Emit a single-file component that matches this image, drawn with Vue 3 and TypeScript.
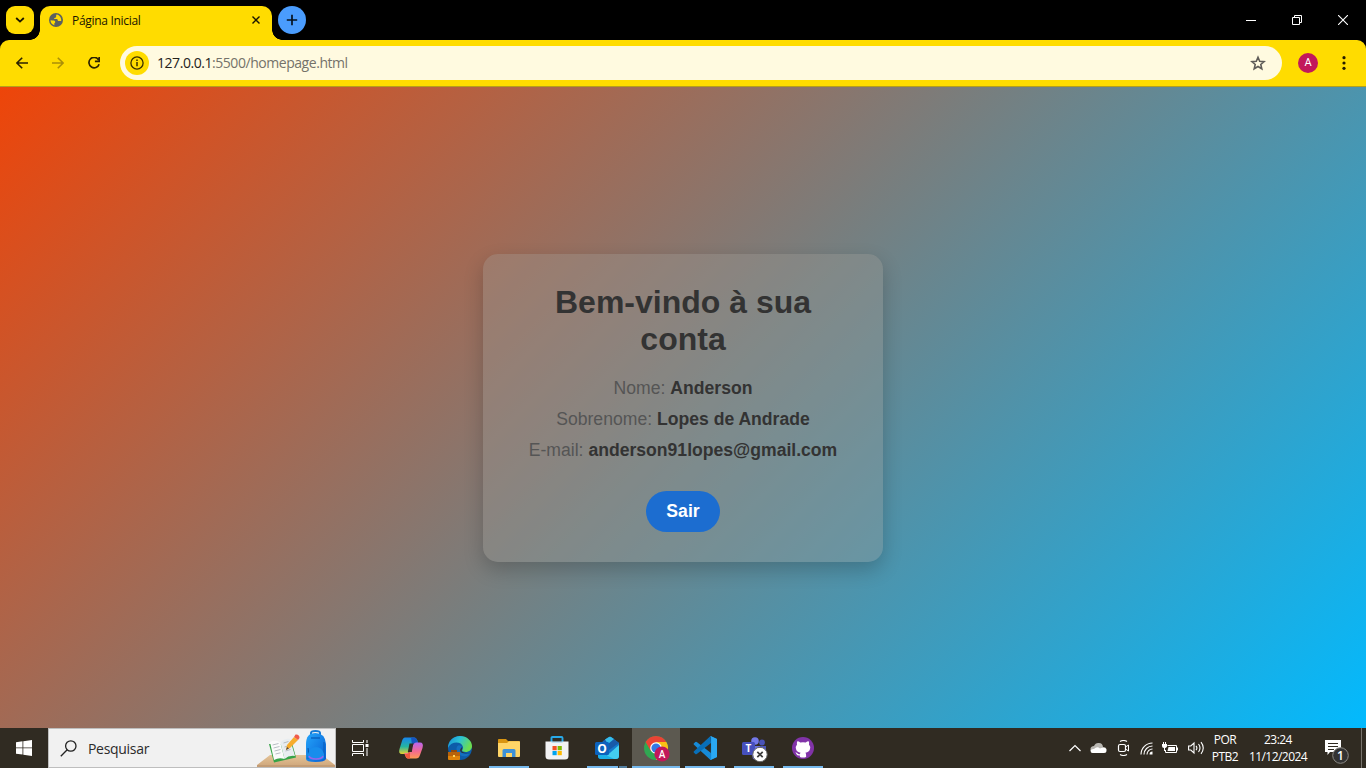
<script setup lang="ts">
interface Field {
  label: string
  value: string
}

const fields: Field[] = [
  { label: 'Nome:', value: 'Anderson' },
  { label: 'Sobrenome:', value: 'Lopes de Andrade' },
  { label: 'E-mail:', value: 'anderson91lopes@gmail.com' },
]
</script>

<template>
  <div class="screen">
    <header class="tabstrip">
      <button class="tab-search" aria-label="tabs">
        <svg width="10" height="6" viewBox="0 0 10 6"><path d="M1.2 1l3.8 3.6L8.800 1" fill="none" stroke="#1a1500" stroke-width="1.8" /></svg>
      </button>
      <div class="tab">
        <svg class="globe" width="14" height="14" viewBox="0 0 14 14">
          <circle cx="7" cy="7" r="7" fill="#5b6060" />
          <path d="M7.600 1.600C6.400 3 7.800 3.400 6.800 4.600 5.900 5.300 5.200 4.900 5.100 6.100H7.900C8.900 6.300 8.500 7.600 9.200 8H12.200C12.600 5 10.600 2 7.600 1.600Z" fill="#ffdc00" />
          <path d="M1.500 7.200C3.400 7.600 5.800 6.900 6.200 8.700 6.500 9.800 5 9.900 5.200 11L5.500 12.300C3.100 11.600 1.500 9.600 1.500 7.200Z" fill="#ffdc00" />
        </svg>
        <span class="tab-title">Página Inicial</span>
        <svg class="tab-close" width="8" height="8" viewBox="0 0 8 8"><path d="M.5.5l7 7M7.500.5l-7 7" stroke="#1a1500" stroke-width="1.400" /></svg>
      </div>
      <button class="new-tab" aria-label="new">
        <svg width="12" height="12" viewBox="0 0 12 12"><path d="M6 .8v10.400M.8 6h10.400" stroke="#06121f" stroke-width="1.700" /></svg>
      </button>
      <div class="window-controls">
        <svg width="10" height="10" viewBox="0 0 10 10"><path d="M0 5.500h10" stroke="#fff" /></svg>
        <svg width="10" height="10" viewBox="0 0 10 10"><path d="M.5 2.500h7v7h-7zM2.500 2.500v-2h7v7h-2" fill="none" stroke="#fff" /></svg>
        <svg width="10" height="10" viewBox="0 0 10 10"><path d="M0 0l10 10M10 0L0 10" stroke="#fff" stroke-width="1.100" /></svg>
      </div>
    </header>

    <div class="toolbar-back">
      <nav class="toolbar">
        <svg class="nav" width="12" height="12" viewBox="0 0 12 12"><path d="M12 6H1M6.200.7L.9 6l5.300 5.300" fill="none" stroke="#2b2100" stroke-width="1.600" /></svg>
        <svg class="nav" width="12" height="12" viewBox="0 0 12 12"><path d="M0 6h11M5.800.7L11.100 6l-5.300 5.300" fill="none" stroke="#ab8f08" stroke-width="1.600" /></svg>
        <svg class="nav" width="12" height="12" viewBox="0 0 12 12"><path d="M10.500 2.700A5.200 5.200 0 1 0 11.100 7.200M11.200 0v4.300H6.900" fill="none" stroke="#2b2100" stroke-width="1.700" /></svg>
        <div class="omnibox">
          <span class="info">
            <svg width="14" height="14" viewBox="0 0 14 14"><circle cx="7" cy="7" r="6.100" fill="none" stroke="#3a3000" stroke-width="1.300" /><path d="M7 6v4.300M7 3.600v1.500" stroke="#3a3000" stroke-width="1.500" /></svg>
          </span>
          <span class="url"><b>127.0.0.1</b>:5500/homepage.html</span>
          <svg class="star" width="16" height="16" viewBox="0 0 16 16"><path d="M8 2.200l1.700 4 4.400.4-3.300 2.900 1 4.300L8 11.500l-3.800 2.300 1-4.300L1.900 6.600l4.400-.4z" fill="none" stroke="#5f5c58" stroke-width="1.600" /></svg>
        </div>
        <span class="avatar">A</span>
        <svg class="kebab" width="4" height="14" viewBox="0 0 4 14"><g fill="#241c00"><circle cx="2" cy="1.700" r="1.600" /><circle cx="2" cy="7" r="1.600" /><circle cx="2" cy="12.300" r="1.600" /></g></svg>
      </nav>
    </div>

    <main class="page">
      <section class="card">
        <h1>Bem-vindo à sua<br />conta</h1>
        <p v-for="f in fields" :key="f.label">{{ f.label }} <strong>{{ f.value }}</strong></p>
        <button class="logout">Sair</button>
      </section>
    </main>

    <footer class="taskbar">
      <div class="start">
        <svg width="16" height="16" viewBox="0 0 16 16"><path d="M0 2.200L6.500 1.300V7.500H0zM7.300 1.200L16 0V7.500H7.300zM0 8.300H6.500V14.600L0 13.700zM7.300 8.300H16V16L7.300 14.700z" fill="#fff" /></svg>
      </div>
      <div class="search">
        <svg class="lens" width="17" height="17" viewBox="0 0 17 17"><circle cx="10.800" cy="6" r="5.200" fill="none" stroke="#222" stroke-width="1.300" /><path d="M7.200 9.800L.8 16.200" stroke="#222" stroke-width="1.300" /></svg>
        <span class="search-label">Pesquisar</span>
        <svg class="art" width="78" height="38" viewBox="0 0 78 38">
          <defs>
            <linearGradient id="bag" x1="0" y1="0" x2="1" y2="1"><stop stop-color="#25a5fa" /><stop offset="1" stop-color="#075fd4" /></linearGradient>
            <linearGradient id="desk" x1="0" y1="0" x2="0" y2="1"><stop stop-color="#e4c397" /><stop offset="1" stop-color="#cea57a" /></linearGradient>
          </defs>
          <path d="M13 26H65L78 36V38H0V36z" fill="url(#desk)" /><path d="M0 36H78V38H0z" fill="#c39c74" />
          <path d="M12 15L17 33.500L39 28.500L34.500 12L24 15z" fill="#35a447" />
          <path d="M13 13Q19 10 23.500 14L27.500 30Q22 28 17 31z" fill="#fafafa" /><path d="M23.500 14Q27 9 33 10L38 27Q32 26 27.500 30z" fill="#e8edf0" />
          <path d="M15.500 16l6-1.500M16.500 19l6-1.500M17.500 22l6-1.500M18.500 25l5-1.200M26.500 14l5-1.500M27.500 18l5-1.500M28.500 22l5-1.500" stroke="#a6adb5" stroke-width=".8" />
          <path d="M29 21L30 16L37 8L41 11L33 19z" fill="#f7ac2c" /><path d="M37 8L38.500 5.500Q42.500 5 42.500 9L41 11z" fill="#f05b49" /><path d="M29 21l1-3 2 1.600z" fill="#59483c" />
          <path d="M54 7V4Q54 2 58.500 2T63 4V7" fill="none" stroke="#1479d5" stroke-width="2" />
          <path d="M49 15Q49 4 58.500 4T69 15V30Q68 33 58.500 33T49 30z" fill="url(#bag)" />
          <path d="M51 19Q52 27 51 30M67 13V29" stroke="#075bb8" /><path d="M51 25Q53 18 59 18T67 25V29Q65 31 59 31T51 29z" fill="#188dec" /><path d="M52 27Q53 30 59 30T66 27" fill="none" stroke="#9864eb" stroke-width="1.500" />
          <path d="M54 9h9" stroke="#075bb8" stroke-width="1.300" />
        </svg>
      </div>
      <div class="cell taskview">
        <svg width="17" height="16" viewBox="0 0 17 16"><path d="M.5 0v2.500h11V0M.5 16v-2.500h11V16M.5 4.500h11v7H.5zM15 0v3M15 8v8" fill="none" stroke="#fff" /><path d="M13.500 4h3v3h-3z" fill="#fff" /></svg>
      </div>

      <div class="apps">
        <div class="cell">
          <svg width="26" height="24" viewBox="0 0 26 24">
            <defs>
              <linearGradient id="cpl" x1="0" y1="0" x2="0" y2="1"><stop stop-color="#1785ee" /><stop offset=".55" stop-color="#25b5a0" /><stop offset="1" stop-color="#e6d22f" /></linearGradient>
              <linearGradient id="cpr" x1="0" y1="0" x2="0" y2="1"><stop stop-color="#b765f0" /><stop offset=".55" stop-color="#f36a91" /><stop offset="1" stop-color="#ff9a52" /></linearGradient>
            </defs>
            <path d="M7 1.500H16Q18.500 1.500 19.500 5L20 7H17Q14 7 13 11L11 16Q10 18 7 18H4Q0 18 1.500 13L4 5Q5 1.500 7 1.500z" fill="url(#cpl)" />
            <path d="M13 1.500H16Q18.500 1.500 19.500 5L20 7H17Q15 7 14 9z" fill="#1655bf" />
            <path d="M18 22.500H10Q8 22.500 7 19L6 17H9Q12 17 13 13L15 9Q16 6.500 18 6.500H22Q26 6.500 24.500 12L22 19Q21 22.500 18 22.500z" fill="url(#cpr)" />
            <path d="M12 22.500H10Q8 22.500 7 18H9Q11 18 12 15z" fill="#f0583d" /><path d="M11.500 7.500h3.800l-1.500 8.500h-4z" fill="#302b22" />
          </svg>
        </div>
        <div class="cell">
          <svg width="24" height="24" viewBox="0 0 24 24">
            <defs><linearGradient id="edge" x1="0" y1="0" x2="1" y2=".4"><stop stop-color="#168bd8" /><stop offset=".5" stop-color="#2cc3d4" /><stop offset="1" stop-color="#6cdd50" /></linearGradient></defs>
            <circle cx="12" cy="12" r="12" fill="#0d5ca9" />
            <path d="M0 12C0 5 5 0 12 0s12 5 12 10c0 5-5 7-9 5.500-2-1 .5-2 0-4.500C13.500 5 3 5 0 12z" fill="url(#edge)" />
            <path d="M10 9.500C6 13 10 22 19 20L22 17.500C16 19 12 17 12.500 13.500L14 11Q12 8.500 10 9.500z" fill="#146fc0" />
            <path d="M12.500 13Q10.500 18.500 22.500 17Q17 18 13.500 15.500L14 11z" fill="#302b22" />
            <path d="M3 14h6v2H3z" fill="#934b0a" /><rect y="16" width="12" height="8" rx="1" fill="#df8309" /><path d="M0 17q0-1 1-1h10q1 0 1 1v3H0z" fill="#b7620b" /><path d="M5 19h2v2H5z" fill="#ffd35b" />
          </svg>
        </div>
        <div class="cell running">
          <svg width="22" height="20" viewBox="0 0 22 20"><path d="M0 1.500Q0 1 1 1H8L10 3H21V9H0z" fill="#d99511" /><path d="M0 5H9L11 3.300H22V18Q22 19 21 19H1Q0 19 0 18z" fill="#ffd567" /><path d="M4.500 19V12.500Q4.500 11 6 11H16Q17.500 11 17.500 12.500V19H14V15H8V19z" fill="#3d91d8" /></svg>
        </div>
        <div class="cell">
          <svg class="store" width="24" height="24" viewBox="0 0 24 24"><path d="M6.500 7V2Q6.500 1 7.500 1h9q1 0 1 1v5" fill="none" stroke="#28a9e8" stroke-width="1.900" /><path d="M.5 5.500h23v14.500q0 3.500-3.500 3.500H4Q.5 23.500.5 20z" fill="#f2f2f3" /><path d="M6.500 5.500h11v1.200h-11z" fill="#28a9e8" opacity=".35" /><path d="M7.500 10h4.200v4.200H7.500z" fill="#f25022" /><path d="M12.600 10h4.200v4.200h-4.200z" fill="#7fba00" /><path d="M7.500 15h4.200v4.200H7.500z" fill="#00a4ef" /><path d="M12.600 15h4.200v4.200h-4.200z" fill="#ffb900" /></svg>
        </div>
        <div class="cell running grouped">
          <svg width="24" height="24" viewBox="0 0 24 24"><path d="M3 9L14 1Q15 .5 16 1L24 7V20Q24 23 21 23H6Q3 23 3 20z" fill="#1479cc" /><path d="M8 5L14 1Q15 .5 16 1L24 7L14 14z" fill="#185aa9" /><path d="M10 3.500L14 1Q15 .5 16 1L19 3L13 8z" fill="#35bdeb" /><path d="M24 9V20Q24 23 21 23H8z" fill="#43cef0" /><path d="M3 15L19 23H6Q3 23 3 20z" fill="#1db0e8" /><rect y="6" width="14" height="13" rx="1.500" fill="#0c62bd" /><text x="7" y="16.500" text-anchor="middle" class="glyph outlook-o">O</text></svg>
        </div>
        <div class="cell running active">
          <svg class="chrome" width="28" height="28" viewBox="0 0 28 28">
            <circle cx="12" cy="14" r="12" fill="#30a752" /><path d="M1.600 8A12 12 0 0 1 22.400 8H12L6.800 17z" fill="#ea4335" /><path d="M12 8H22.400A12 12 0 0 1 12 26L17.200 17z" fill="#fbc116" /><circle cx="12" cy="14" r="5.800" fill="#fff" /><circle cx="12" cy="14" r="4.600" fill="#3478e5" />
            <circle cx="18" cy="20" r="7.600" fill="#c2185b" /><text x="18" y="23.700" text-anchor="middle" class="glyph badge-a">A</text>
          </svg>
        </div>
        <div class="cell running">
          <svg width="24" height="24" viewBox="0 0 24 24"><path d="M17.500 0L24 3V21L17.500 24L1 8.800Q0 8 1 7.200L2.300 6Q3 5.500 3.800 6L18 17V7z" fill="#178bd8" /><path d="M17.500 24L18 17V7L3.800 18Q3 18.500 2.300 18L1 16.800Q0 16 1 15.200L17.500 0L18 7z" fill="#086fb9" /><path d="M17.500 0L24 3V21L17.500 24L18.200 22V2z" fill="#2aa8f2" /></svg>
        </div>
        <div class="cell running">
          <svg class="teams" width="28" height="26" viewBox="0 0 28 26"><circle cx="21" cy="5.500" r="2.900" fill="#4953b7" /><path d="M17 9H25V14H17z" fill="#4b55b8" /><circle cx="14" cy="4" r="3.800" fill="#7379e9" /><path d="M9 9H19V19Q17 23 12 22z" fill="#6c73df" /><rect x="1" y="5" width="13" height="13" rx="1.500" fill="#4650bd" /><text x="7.500" y="15.300" text-anchor="middle" class="glyph teams-t">T</text><circle cx="19" cy="17.500" r="7.200" fill="#fff" stroke="#666" /><path d="M16.300 14.800l5.400 5.400M21.700 14.800l-5.400 5.400" stroke="#3d3d3d" stroke-width="1.700" /></svg>
        </div>
        <div class="cell running">
          <svg width="22" height="22" viewBox="0 0 22 22"><circle cx="11" cy="11" r="11" fill="#8133a8" /><path d="M5.200 4.400Q6.500 4.200 8.300 5.500Q11 4.900 13.700 5.500Q15.500 4.200 16.800 4.400Q17.400 6 17 7.400Q18.600 9.200 18 12Q17.300 15.200 13.400 15.700Q14.200 16.500 14.100 18V20Q11 21.200 7.900 20V18.400Q5.300 18.900 4.400 16.900Q4 16 3.200 15.500Q4.900 15.200 5.600 16.500Q6.500 17.700 8 17.100Q8.100 16.200 8.600 15.700Q4.700 15.200 4 12Q3.400 9.200 5 7.400Q4.600 6 5.200 4.400z" fill="#fff" /></svg>
        </div>
      </div>

      <div class="tray">
        <div class="status">
          <svg width="12" height="8" viewBox="0 0 12 8"><path d="M.5 7L6 1.500 11.500 7" fill="none" stroke="#fff" stroke-width="1.200" /></svg>
          <svg width="17" height="12" viewBox="0 0 17 12"><path d="M4 10Q0 10 .5 6.500Q1 4 4 4Q5.500.500 9 1Q12.500 1 13 5Q16.500 5 16.500 8L10 10z" fill="#b9b7b2" /><path d="M2.500 11Q.5 11 .5 8.500Q1 6.800 4 7Q7 4 10 6.500Q11 5.500 13.500 5.700Q16.500 6 16.500 8.500T14 11z" fill="#fff" /></svg>
          <svg width="13" height="16" viewBox="0 0 13 16"><path d="M3 1.500Q6.500-.5 10 1.500M3 14.500Q6.500 16.500 10 14.500" fill="none" stroke="#fff" stroke-width="1.100" /><rect x="1.500" y="4.500" width="7" height="7" rx="1.500" fill="none" stroke="#fff" stroke-width="1.200" /><path d="M8.500 7L11.500 5V11L8.500 9" fill="none" stroke="#fff" /></svg>
          <svg width="13" height="13" viewBox="0 0 13 13"><g fill="none" stroke="#fff" stroke-width="1.100"><path d="M1 12.500A11.500 11.500 0 0 1 12.500 1M4 12.500A8.500 8.500 0 0 1 12.500 4M7 12.500A5.500 5.500 0 0 1 12.500 7" /></g><path d="M9.500 12.500a3 3 0 0 1 3-3v3z" fill="#fff" /></svg>
          <svg width="16" height="12" viewBox="0 0 16 12"><path d="M5.500 3.500H14.500V10.500H3.500V8" fill="none" stroke="#fff" /><path d="M6.500 5H13V9H5.500z" fill="#fff" /><path d="M15 5.500h1v3h-1zM0 2h5v2.500Q4 6 3 6v3H2V6Q0 6 0 4z" fill="#fff" /><path d="M1.500 0v2M3.500 0v2" stroke="#fff" /></svg>
          <svg width="17" height="14" viewBox="0 0 17 14"><g fill="none" stroke="#fff" stroke-width="1.100"><path d="M.6 5h2.200L6 2v10L2.800 9H.6zM8 4.800Q9.800 7 8 9.200M10.500 3Q13.500 7 10.500 11M13 1.200Q17.500 7 13 12.800" /></g></svg>
        </div>
        <div class="lang"><span>POR</span><span>PTB2</span></div>
        <div class="clock"><span>23:24</span><span class="date">11/12/2024</span></div>
        <svg class="notice" width="26" height="26" viewBox="0 0 26 26"><path d="M1 1H17V13H6L3.500 16V13H1z" fill="#fff" /><path d="M4 4.500H14M4 7.500H14M4 10.500H10" stroke="#302b22" /><circle cx="16.500" cy="16.500" r="7.800" fill="#333" stroke="#8c8a85" /><text x="16.500" y="21" text-anchor="middle" class="glyph count">1</text></svg>
      </div>
    </footer>
  </div>
</template>

<style>
body { margin: 0; overflow: hidden; }
</style>

<style scoped>
.screen { width: 1366px; height: 768px; display: flex; flex-direction: column; font-family: "Open Sans", "Noto Sans", sans-serif; overflow: hidden; }
svg { display: block; flex: none; }
button { border: 0; padding: 0; }

.tabstrip { height: 40px; flex: none; background: #000; display: flex; box-sizing: border-box; padding: 6px 0 0 6px; }
.tab-search { width: 28px; height: 28px; border-radius: 9px; background: #ffdc00; display: grid; place-items: center; }
.tab { position: relative; width: 232px; height: 34px; margin-left: 6px; background: #ffdc00; border-radius: 10px 10px 0 0; display: flex; align-items: center; box-sizing: border-box; padding: 0 12px 6px 9px; }
.tab::before, .tab::after { content: ""; position: absolute; bottom: 0; width: 10px; height: 10px; }
.tab::before { left: -10px; background: radial-gradient(circle at 0 0, transparent 9.500px, #ffdc00 10px); }
.tab::after { right: -10px; background: radial-gradient(circle at 100% 0, transparent 9.500px, #ffdc00 10px); }
.tab-title { margin-left: 9px; font-size: 12px; letter-spacing: -0.3px; color: #1a1500; white-space: nowrap; line-height: 16px; padding-top: 2px; }
.tab-close { margin-left: auto; }
.new-tab { width: 28px; height: 28px; margin-left: 6px; border-radius: 50%; background: #4a9cfd; display: grid; place-items: center; }
.window-controls { margin-left: auto; display: flex; gap: 36px; padding: 9px 18px 0 0; }

.toolbar-back { background: #000; flex: none; }
.toolbar { height: 47px; box-sizing: border-box; background: #ffdc00; border-radius: 9px 9px 0 0; border-bottom: 1px solid #b5a01b; display: flex; align-items: center; padding: 0 20px 0 16px; }
.nav { margin-right: 24px; }
.omnibox { width: 1162px; height: 34px; flex: none; box-sizing: border-box; margin-left: -4px; border-radius: 17px; background: #fffae0; display: flex; align-items: center; padding: 0 16px 0 5px; }
.info { width: 24px; height: 24px; border-radius: 50%; background: #ffdc00; display: grid; place-items: center; }
.url { margin-left: 8px; font-size: 14px; letter-spacing: -0.45px; color: #75726a; line-height: 20px; }
.url b { font-weight: 400; color: #24221c; }
.star { margin-left: auto; }
.avatar { width: 20px; height: 20px; margin-left: 16px; border-radius: 50%; background: #c2185b; color: #fff; font: 400 11px/20px Roboto, sans-serif; text-align: center; }
.kebab { margin-left: auto; }

.page { flex: 1; display: flex; align-items: center; justify-content: center; background: linear-gradient(135deg, #ee4509, #767f80 50%, #02bafe); font-family: "Liberation Sans", Arial, sans-serif; }
.card { width: 400px; height: 308px; margin-top: 1px; box-sizing: border-box; padding: 30px; border-radius: 15px; background: rgba(160, 155, 150, 0.32); box-shadow: 0 8px 20px rgba(0, 0, 0, 0.2); text-align: center; color: #333; }
.card h1 { margin: 0 0 20px; font-size: 32px; line-height: 37px; font-weight: 700; }
.card p { margin: 0 0 10px; font-size: 17.6px; line-height: 21px; color: #555; white-space: nowrap; }
.card strong { color: #333; }
.logout { display: block; width: 74px; height: 41px; margin: 30px auto 0; border-radius: 21px; background: #1c6dd0; color: #fff; font: 700 17.6px/41px "Liberation Sans", Arial, sans-serif; }

.taskbar { height: 40px; flex: none; background: #302b22; display: flex; color: #fff; }
.start { width: 48px; display: grid; place-items: center; }
.search { width: 288px; box-sizing: border-box; border: 1px solid #bebebe; background: #f1f1f1; display: flex; align-items: center; padding-left: 11px; overflow: hidden; }
.search-label { margin-left: 11px; color: #2b2b2b; font-size: 14px; letter-spacing: -0.3px; }
.art { margin-left: auto; }
.cell { position: relative; width: 48px; height: 40px; display: grid; place-items: center; }
.apps { display: flex; gap: 1px; margin-left: 3px; }
.running::after { content: ""; position: absolute; left: 4px; right: 4px; bottom: 0; height: 2px; background: #76b9ed; }
.grouped::after { background: linear-gradient(90deg, #76b9ed 31px, #302b22 31px 32px, #527e9f 32px); }
.active { background: #5c5950; }
.active::after { left: 0; right: 0; }
.store { margin-right: 2px; }
.chrome { margin-left: 4px; }
.teams { margin: 3px 0 0 2px; }
.glyph { fill: #fff; font-family: "Open Sans", sans-serif; font-weight: 700; }
.outlook-o { font-size: 12px; }
.badge-a { font-size: 10px; font-family: Roboto, sans-serif; font-weight: 500; }
.teams-t { font-size: 10px; }
.count { font-size: 12px; font-weight: 600; }
.tray { margin-left: auto; display: flex; align-items: center; gap: 8px; padding-right: 4px; }
.status { display: flex; align-items: center; gap: 9.700px; }
.lang, .clock { display: flex; flex-direction: column; align-items: center; font-size: 12px; line-height: 17px; }
.lang { width: 28px; margin-left: -2px; letter-spacing: -0.5px; }
.clock { width: 62px; letter-spacing: -0.55px; }
.notice { margin: 8px 3px 0 7px; }
.tray::after { content: ""; width: 1px; height: 40px; background: #77736c; }
</style>
